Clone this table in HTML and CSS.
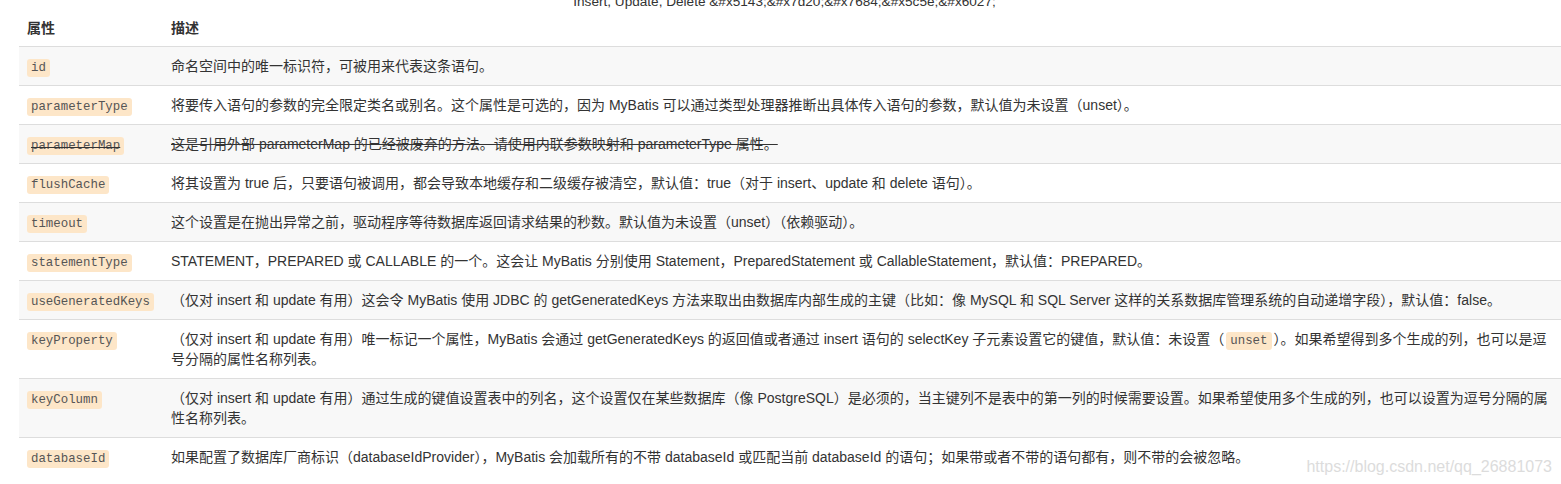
FILE: index.html
```html
<!DOCTYPE html>
<html lang="zh-CN">
<head>
  <meta charset="UTF-8" />
  <title>MyBatis select 属性</title>
  <link rel="stylesheet" href="styles.css">
</head>
<body>
  <p class="caption">Insert, Update, Delete &amp;#x5143;&amp;#x7d20;&amp;#x7684;&amp;#x5c5e;&amp;#x6027;</p>
  <div class="wrap">
    <table class="attrs">
      <thead>
        <tr>
          <th class="name">属性</th>
          <th>描述</th>
        </tr>
      </thead>
      <tbody>
        <tr>
          <td><code>id</code></td>
          <td>命名空间中的唯一标识符，可被用来代表这条语句。</td>
        </tr>
        <tr>
          <td><code>parameterType</code></td>
          <td>将要传入语句的参数的完全限定类名或别名。这个属性是可选的，因为 MyBatis 可以通过类型处理器推断出具体传入语句的参数，默认值为未设置（unset）。</td>
        </tr>
        <tr class="deprecated">
          <td><code>parameterMap</code></td>
          <td>这是引用外部 parameterMap 的已经被废弃的方法。请使用内联参数映射和 parameterType 属性。</td>
        </tr>
        <tr>
          <td><code>flushCache</code></td>
          <td>将其设置为 true 后，只要语句被调用，都会导致本地缓存和二级缓存被清空，默认值：true（对于 insert、update 和 delete 语句）。</td>
        </tr>
        <tr>
          <td><code>timeout</code></td>
          <td>这个设置是在抛出异常之前，驱动程序等待数据库返回请求结果的秒数。默认值为未设置（unset）（依赖驱动）。</td>
        </tr>
        <tr>
          <td><code>statementType</code></td>
          <td>STATEMENT，PREPARED 或 CALLABLE 的一个。这会让 MyBatis 分别使用 Statement，PreparedStatement 或 CallableStatement，默认值：PREPARED。</td>
        </tr>
        <tr>
          <td><code>useGeneratedKeys</code></td>
          <td>（仅对 insert 和 update 有用）这会令 MyBatis 使用 JDBC 的 getGeneratedKeys 方法来取出由数据库内部生成的主键（比如：像 MySQL 和 SQL Server 这样的关系数据库管理系统的自动递增字段），默认值：false。</td>
        </tr>
        <tr>
          <td><code>keyProperty</code></td>
          <td>（仅对 insert 和 update 有用）唯一标记一个属性，MyBatis 会通过 getGeneratedKeys 的返回值或者通过 insert 语句的 selectKey 子元素设置它的键值，默认值：未设置（<code>unset</code>）。如果希望得到多个生成的列，也可以是逗号分隔的属性名称列表。</td>
        </tr>
        <tr>
          <td><code>keyColumn</code></td>
          <td>（仅对 insert 和 update 有用）通过生成的键值设置表中的列名，这个设置仅在某些数据库（像 PostgreSQL）是必须的，当主键列不是表中的第一列的时候需要设置。如果希望使用多个生成的列，也可以设置为逗号分隔的属性名称列表。</td>
        </tr>
        <tr>
          <td><code>databaseId</code></td>
          <td>如果配置了数据库厂商标识（databaseIdProvider），MyBatis 会加载所有的不带 databaseId 或匹配当前 databaseId 的语句；如果带或者不带的语句都有，则不带的会被忽略。</td>
        </tr>
      </tbody>
    </table>
  </div>
  <div class="watermark">https://blog.csdn.net/qq_26881073</div>
</body>
</html>
```

FILE: styles.css
```css
body {
  margin: 0;
  padding: 0;
  font-family: "Liberation Sans", "Noto Sans CJK SC", sans-serif;
  font-size: 14px;
  color: #333;
  background: #fff;
  overflow: hidden;
  position: relative;
  height: 484px;
}
.caption {
  margin: -8px 0 0;
  padding-left: 8px;
  font-size: 13.6px;
  line-height: 20px;
  height: 20px;
  text-align: center;
  white-space: nowrap;
}
.wrap {
  padding-left: 19px;
  width: 1600px;
}
.attrs {
  width: 1580px;
  border-collapse: collapse;
}
.attrs th,
.attrs td {
  padding: 9px 8px;
  line-height: 20px;
  text-align: left;
  vertical-align: top;
}
.attrs th {
  font-weight: bold;
  padding: 6px 8px 8px;
  border-bottom: 1px solid #ddd;
}
.attrs th.name {
  width: 128px;
}
.attrs td {
  border-top: 1px solid #ddd;
}
.attrs thead + tbody tr:first-child td {
  border-top: none;
}
.attrs tbody tr:nth-child(odd) {
  background: #f8f8f8;
}
.attrs td:last-child {
  padding-right: 40px;
}
code {
  font-family: "Liberation Mono", "DejaVu Sans Mono", monospace;
  font-size: 12.4px;
  line-height: 1;
  color: #555;
  background: #fde6c8;
  padding: 2px 4px;
  border-radius: 3px;
}
td code {
  margin: 0 2px;
}
td:first-child code {
  margin: 0;
}
.deprecated td {
  text-decoration: line-through;
}
.watermark {
  position: absolute;
  right: 9px;
  bottom: 8px;
  font-size: 16px;
  color: #dcdcdc;
}
```
